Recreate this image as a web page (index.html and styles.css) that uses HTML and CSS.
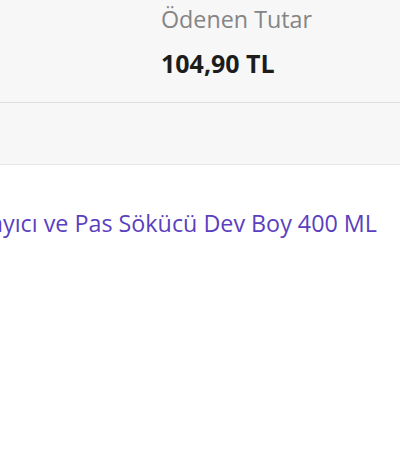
FILE: index.html
```html
<!DOCTYPE html>
<html lang="tr">
<head>
<meta charset="utf-8">
<link rel="stylesheet" href="styles.css">
</head>
<body>
<div class="summary">
  <div class="paid">
    <div class="paid-label">Ödenen Tutar</div>
    <div class="paid-value">104,90 TL</div>
  </div>
</div>
<div class="band"></div>
<div class="product">
  <span class="product-name">Yağlayıcı ve Pas Sökücü Dev Boy 400 ML</span>
</div>
</body>
</html>
```
FILE: styles.css
```css
html, body {
  margin: 0;
  padding: 0;
  background: #fff;
  font-family: "Open Sans", "Noto Sans", sans-serif;
}
.summary {
  height: 102px;
  background: #f7f7f7;
  border-bottom: 1px solid #dedede;
  box-sizing: content-box;
  padding-left: 161px;
}
.paid {
  padding-top: 5px;
}
.paid-label {
  font-size: 23.3px;
  line-height: 28px;
  color: #858585;
}
.paid-value {
  margin-top: 15px;
  font-size: 25px;
  line-height: 30px;
  font-weight: 700;
  color: #1c1c1c;
}
.band {
  height: 61px;
  background: #f7f7f7;
  border-bottom: 1px solid #e6e6e6;
}
.product {
  display: flex;
  justify-content: flex-end;
  overflow: hidden;
  padding: 43px 23px 0 0;
  white-space: nowrap;
}
.product-name {
  flex: none;
  font-size: 23.3px;
  line-height: 30px;
  color: #5a3fc0;
}
```
